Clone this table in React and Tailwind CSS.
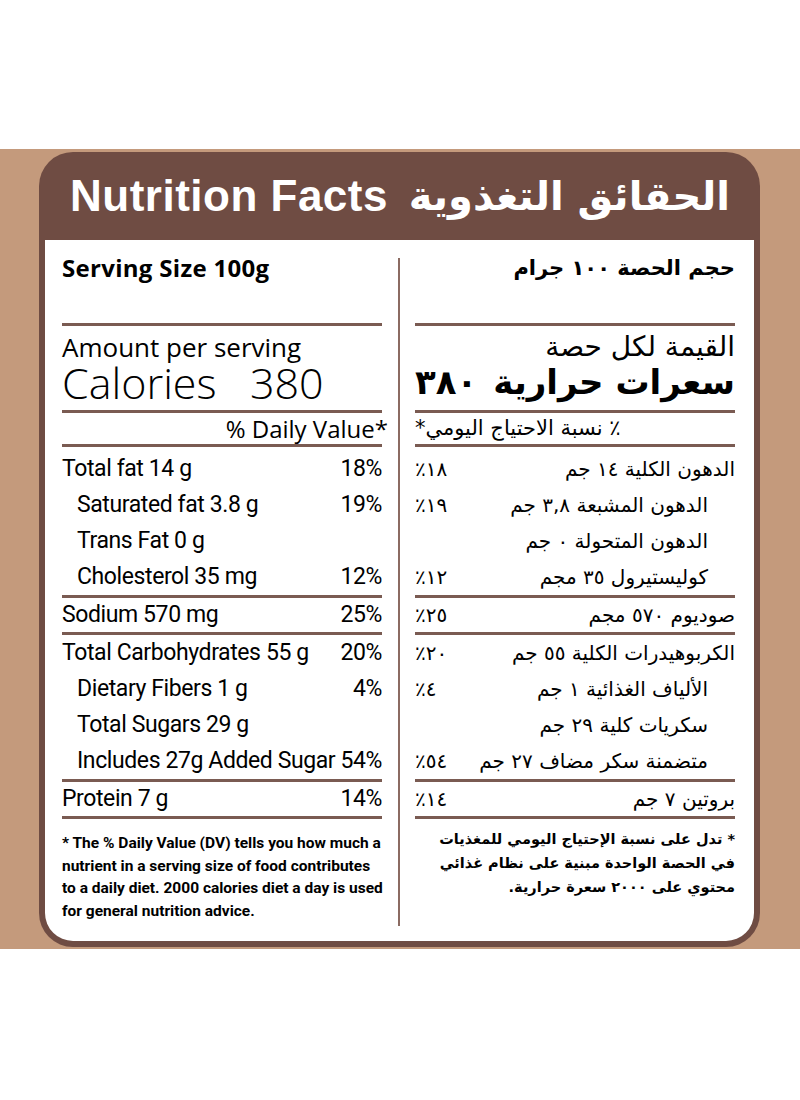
import React from "react";

const EN = { fontFamily: "Roboto, 'Liberation Sans', sans-serif" };
const ENW = { fontFamily: "'Open Sans', 'Liberation Sans', sans-serif" };
const AR = { fontFamily: "'DejaVu Sans', 'Noto Sans', sans-serif" };

const Line = () => <div className="h-[3px] bg-[#7a5b52]" />;

function Row({ label, pct, indent, rtl, h = "h-[36px]" }) {
  return (
    <div className={`${h} flex items-center justify-between whitespace-nowrap`} dir={rtl ? "rtl" : "ltr"}>
      <span className={indent ? (rtl ? "pr-[27px]" : "pl-[15px]") : ""}>{label}</span>
      <span dir="ltr">{pct}</span>
    </div>
  );
}

export default function App() {
  const left1 = [
    ["Total fat 14 g", "18%", false],
    ["Saturated fat 3.8 g", "19%", true],
    ["Trans Fat 0 g", "", true],
    ["Cholesterol 35 mg", "12%", true],
  ];
  const left2 = [
    ["Total Carbohydrates 55 g", "20%", false],
    ["Dietary Fibers 1 g", "4%", true],
    ["Total Sugars 29 g", "", true],
    ["Includes 27g Added Sugar", "54%", true],
  ];
  const right1 = [
    ["الدهون الكلية ١٤ جم", "٪١٨", false],
    ["الدهون المشبعة ٣,٨ جم", "٪١٩", true],
    ["الدهون المتحولة ٠ جم", "", true],
    ["كوليستيرول ٣٥ مجم", "٪١٢", true],
  ];
  const right2 = [
    ["الكربوهيدرات الكلية ٥٥ جم", "٪٢٠", false],
    ["الألياف الغذائية ١ جم", "٪٤", true],
    ["سكريات كلية ٢٩ جم", "", true],
    ["متضمنة سكر مضاف ٢٧ جم", "٪٥٤", true],
  ];

  return (
    <div className="w-[800px] h-[1100px] bg-white pt-[149px]">
      <div className="h-[800px] bg-[#c49a7c] pt-[3px] pl-[39px] pr-[40px]">
        <div className="h-[795px] rounded-[34px] bg-[#6f4c43] flex flex-col px-[6px] pb-[6px]">
          <div className="h-[88px] shrink-0 flex items-center justify-between pl-[25px] pr-[24px] text-white">
            <span className="text-[44px] font-bold leading-none tracking-[0.5px]" style={{ fontFamily: "'Liberation Sans', Arial, sans-serif" }}>
              Nutrition Facts
            </span>
            <span dir="rtl" className="text-[40px] font-bold leading-none" style={AR}>
              الحقائق التغذوية
            </span>
          </div>
          <div className="flex-1 bg-white rounded-b-[28px] flex pl-[17px] pr-[19px] pt-[14px] text-black">
            {/* LEFT */}
            <div className="w-[320px] flex flex-col">
              <div className="h-[69px] text-[24px] font-bold leading-[28px] tracking-[0.3px] whitespace-nowrap" style={ENW}>
                Serving Size 100g
              </div>
              <Line />
              <div className="h-[84px] pt-[8px] whitespace-nowrap" style={ENW}>
                <div className="text-[26px] leading-[26px]">Amount per serving</div>
                <div className="text-[43px] leading-[46px] font-light">Calories&nbsp;&nbsp; 380</div>
              </div>
              <Line />
              <div className="h-[31px] text-[24px] leading-[31px] text-right mr-[-6px] whitespace-nowrap" style={ENW}>
                % Daily Value*
              </div>
              <Line />
              <div className="pt-[4px] text-[23px] tracking-[-0.4px]" style={EN}>
                {left1.map((r) => (
                  <Row key={r[0]} label={r[0]} pct={r[1]} indent={r[2]} />
                ))}
                <Line />
                <Row label="Sodium 570 mg" pct="25%" h="h-[34px]" />
                <Line />
                {left2.map((r) => (
                  <Row key={r[0]} label={r[0]} pct={r[1]} indent={r[2]} />
                ))}
                <Line />
                <Row label="Protein 7 g" pct="14%" h="h-[34px]" />
                <Line />
              </div>
              <div className="pt-[13px] text-[15.5px] font-bold leading-[22.5px] whitespace-nowrap" style={EN}>
                * The % Daily Value (DV) tells you how much a
                <br />
                nutrient in a serving size of food contributes
                <br />
                to a daily diet. 2000 calories diet a day is used
                <br />
                for general nutrition advice.
              </div>
            </div>
            {/* DIVIDER */}
            <div className="ml-[16px] mr-[15px] mt-[4px] mb-[15px] w-[2px] bg-[#8b6b62]" />
            {/* RIGHT */}
            <div className="w-[320px] flex flex-col" dir="rtl" style={AR}>
              <div className="h-[69px] text-[21px] font-bold leading-[28px] whitespace-nowrap">حجم الحصة ١٠٠ جرام</div>
              <Line />
              <div className="h-[84px] pt-[6px] whitespace-nowrap">
                <div className="text-[28px] leading-[30px]">القيمة لكل حصة</div>
                <div className="flex justify-between text-[34px] font-bold leading-[40px]">
                  <span>سعرات حرارية</span>
                  <span>٣٨٠</span>
                </div>
              </div>
              <Line />
              <div className="h-[31px] text-[21px] leading-[31px] whitespace-nowrap">
                <span className="block w-full text-left">٪ نسبة الاحتياج اليومي*</span>
              </div>
              <Line />
              <div className="pt-[4px] text-[20px]">
                {right1.map((r) => (
                  <Row key={r[0]} label={r[0]} pct={r[1]} indent={r[2]} rtl />
                ))}
                <Line />
                <Row label="صوديوم ٥٧٠ مجم" pct="٪٢٥" rtl h="h-[34px]" />
                <Line />
                {right2.map((r) => (
                  <Row key={r[0]} label={r[0]} pct={r[1]} indent={r[2]} rtl />
                ))}
                <Line />
                <Row label="بروتين ٧ جم" pct="٪١٤" rtl h="h-[34px]" />
                <Line />
              </div>
              <div className="pt-[8px] text-[14.5px] font-bold leading-[24px] whitespace-nowrap">
                * تدل على نسبة الإحتياج اليومي للمغذيات
                <br />
                في الحصة الواحدة مبنية على نظام غذائي
                <br />
                محتوي على ٢٠٠٠ سعرة حرارية.
              </div>
            </div>
          </div>
        </div>
      </div>
    </div>
  );
}
